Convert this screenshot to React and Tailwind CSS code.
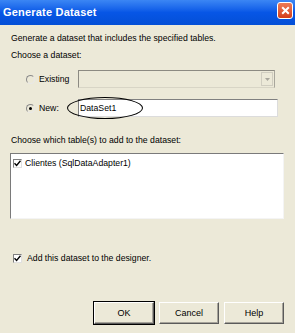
import { useState } from "react";

const FONT = { fontFamily: '"Liberation Sans", Arial, sans-serif' };

const BUTTON_CLASS =
  "flex h-[22px] w-[60px] items-center justify-center border border-t-[#ffffff] border-l-[#ffffff] border-r-[#5a5a5a] border-b-[#5a5a5a] bg-[#ece9d8] text-[9px] text-black shadow-[inset_-1px_-1px_0_#a6a39a]";

function Radio({ checked }) {
  return (
    <span className="relative flex h-[9px] w-[9px] items-center justify-center rounded-full border border-t-[#8a8a8a] border-l-[#8a8a8a] border-r-[#e8e8e8] border-b-[#e8e8e8] bg-[#ece9d8]">
      {checked ? <span className="h-[3px] w-[3px] rounded-full bg-black" /> : null}
    </span>
  );
}

function Check({ checked }) {
  return (
    <span className="flex h-[9px] w-[9px] items-center justify-center border border-t-[#808080] border-l-[#808080] border-r-[#e0e0e0] border-b-[#e0e0e0] bg-white">
      {checked ? (
        <svg width="7" height="7" viewBox="0 0 7 7">
          <path d="M0.5 3.2 L2.6 5.4 L6.5 0.8" fill="none" stroke="#000" strokeWidth="1.4" />
        </svg>
      ) : null}
    </span>
  );
}

export default function App() {
  const [name, setName] = useState("DataSet1");

  return (
    <div className="h-[333px] w-[295px] overflow-hidden bg-[#ece9d8] text-black" style={FONT}>
      <div className="flex h-[25px] items-center justify-between bg-linear-to-b from-[#3b86f4] via-[#0756e6] to-[#044fd6] pl-[3px] pr-[2px]">
        <span className="text-[11px] font-bold tracking-[0.2px] text-white">Generate Dataset</span>
        <span className="mb-[5px] flex h-[17px] w-[16px] items-center justify-center rounded-[3px] border border-white bg-linear-to-b from-[#ec7a56] to-[#d43c16]">
          <svg width="9" height="9" viewBox="0 0 9 9">
            <path d="M1.2 1.2 L7.8 7.8 M7.8 1.2 L1.2 7.8" stroke="#fff" strokeWidth="2" />
          </svg>
        </span>
      </div>

      <div className="flex flex-col px-[11px] text-[8.7px] leading-[12px]">
        <p className="mt-[7px]">Generate a dataset that includes the specified tables.</p>
        <p className="mt-[5px]">Choose a dataset:</p>

        <div className="mt-[9px] flex h-[18px] items-center">
          <span className="ml-[15px]">
            <Radio />
          </span>
          <span className="ml-[4px] w-[39px]">Existing</span>
          <div className="flex h-[18px] w-[197px] items-center justify-end border border-t-[#8c8a82] border-l-[#8c8a82] border-r-[#a8a69c] border-b-[#d8d5c6] bg-[#ece9d8] pr-[1px]">
            <span className="flex h-[14px] w-[12px] items-center justify-center border border-[#d0cdc0]">
              <svg width="5" height="3" viewBox="0 0 5 3">
                <path d="M0 0 H5 L2.5 3 Z" fill="#a8a69c" />
              </svg>
            </span>
          </div>
        </div>

        <div className="relative mt-[11px] flex h-[18px] items-center">
          <span className="ml-[15px]">
            <Radio checked />
          </span>
          <span className="ml-[4px] w-[39px]">New:</span>
          <input
            className="h-[18px] w-[200px] border border-t-[#808080] border-l-[#808080] border-r-[#dcdcdc] border-b-[#dcdcdc] bg-white pl-[1px] text-[8.7px] outline-none"
            style={FONT}
            value={name}
            onChange={(event) => setName(event.target.value)}
          />
          <span className="pointer-events-none absolute left-[56px] top-[-2px] h-[22px] w-[76px] rounded-[50%] border border-black" />
        </div>

        <p className="mt-[17px]">Choose which table(s) to add to the dataset:</p>

        <div className="mt-[7px] ml-[-1px] h-[66px] w-[274px] border border-t-[#7a7a7a] border-l-[#7a7a7a] border-r-[#f4f4f4] border-b-[#f4f4f4] bg-white px-[2px] pt-[3px]">
          <div className="flex items-center">
            <Check checked />
            <span className="ml-[3px]">Clientes (SqlDataAdapter1)</span>
          </div>
        </div>

        <div className="mt-[33px] flex items-center pl-[2px]">
          <Check checked />
          <span className="ml-[5px]">Add this dataset to the designer.</span>
        </div>

        <div className="mt-[38px] flex justify-end gap-[5px] pr-[-1px]">
          <button type="button" className={BUTTON_CLASS + " outline outline-1 outline-black"}>
            OK
          </button>
          <button type="button" className={BUTTON_CLASS}>
            Cancel
          </button>
          <button type="button" className={BUTTON_CLASS}>
            Help
          </button>
        </div>
      </div>
    </div>
  );
}
